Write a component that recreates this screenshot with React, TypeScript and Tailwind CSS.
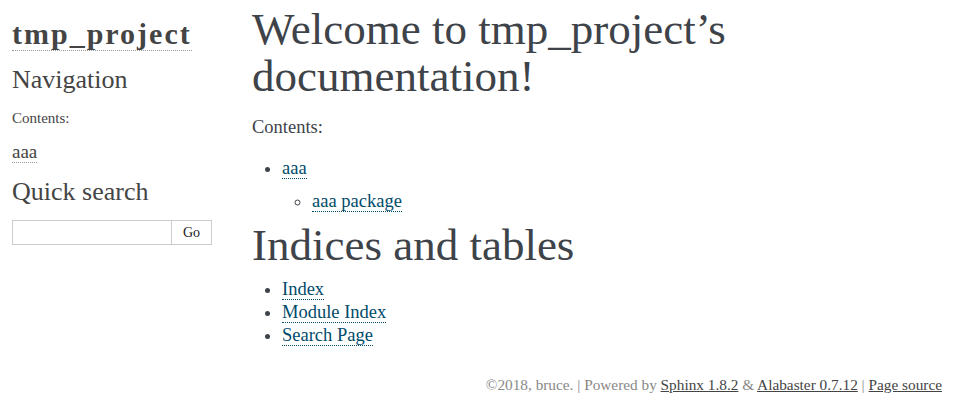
export default function App() {
  const link = 'text-[#004B6B] border-b border-dotted border-[#004B6B]';
  return (
    <div className="min-h-[408px] bg-white text-[#3E4349] font-['Liberation_Serif',Georgia,serif]">
      <div className="ml-[2px] flex w-[940px]">
        <aside className="w-[220px] shrink-0 px-[10px] pt-[16px] text-[#444]">
          <h1 className="text-[30px] font-bold leading-[36px] tracking-[2px]">
            <a className="border-b border-dotted border-[#999]">tmp_project</a>
          </h1>
          <h3 className="mt-[12px] text-[26px] leading-[32px]">Navigation</h3>
          <p className="mt-[12px] text-[15px] leading-[20px]">Contents:</p>
          <ul className="mt-[13px] text-[19px] leading-[22px]">
            <li>
              <a className="border-b border-dotted border-[#999]">aaa</a>
            </li>
          </ul>
          <h3 className="mt-[13px] text-[26px] leading-[32px]">Quick search</h3>
          <form className="mt-[12px] flex h-[25px] w-[200px]">
            <input className="w-[160px] border border-[#ccc] text-[14px] outline-none" />
            <button type="button" className="w-[40px] border border-l-0 border-[#ccc] text-[14px] text-[#222]">
              Go
            </button>
          </form>
        </aside>
        <main className="flex-1 px-[30px] pt-[6px]">
          <h1 className="text-[45px] leading-[47px]">Welcome to tmp_project’s documentation!</h1>
          <p className="mt-[15px] text-[18.5px] leading-[24px]">Contents:</p>
          <ul className="mt-[17px] list-disc pl-[30px] text-[18.5px] leading-[24px]">
            <li>
              <a className={link}>aaa</a>
              <ul className="my-[9px] list-[circle] pl-[30px]">
                <li>
                  <a className={link}>aaa package</a>
                </li>
              </ul>
            </li>
          </ul>
          <h1 className="mt-[6px] text-[45px] leading-[47px]">Indices and tables</h1>
          <ul className="mt-[9px] list-disc pl-[30px] text-[18.5px] leading-[23px]">
            <li>
              <a className={link}>Index</a>
            </li>
            <li>
              <a className={link}>Module Index</a>
            </li>
            <li>
              <a className={link}>Search Page</a>
            </li>
          </ul>
        </main>
      </div>
      <footer className="ml-[2px] mt-[28px] w-[940px] text-right text-[15.3px] leading-[20px] text-[#888]">
        ©2018, bruce. | Powered by <a className="text-[#444] underline">Sphinx 1.8.2</a> &amp;{' '}
        <a className="text-[#444] underline">Alabaster 0.7.12</a> | <a className="text-[#444] underline">Page source</a>
      </footer>
    </div>
  );
}
